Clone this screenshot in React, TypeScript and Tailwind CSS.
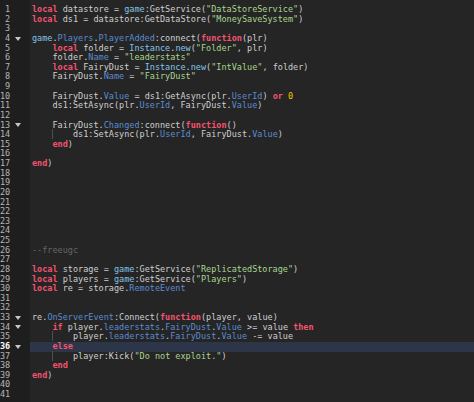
import React from 'react';

const code = [
  'local datastore = game:GetService("DataStoreService")',
  'local ds1 = datastore:GetDataStore("MoneySaveSystem")',
  '',
  'game.Players.PlayerAdded:connect(function(plr)',
  '    local folder = Instance.new("Folder", plr)',
  '    folder.Name = "leaderstats"',
  '    local FairyDust = Instance.new("IntValue", folder)',
  '    FairyDust.Name = "FairyDust"',
  '',
  '    FairyDust.Value = ds1:GetAsync(plr.UserId) or 0',
  '    ds1:SetAsync(plr.UserId, FairyDust.Value)',
  '',
  '    FairyDust.Changed:connect(function()',
  '        ds1:SetAsync(plr.UserId, FairyDust.Value)',
  '    end)',
  '',
  'end)',
  '',
  '',
  '',
  '',
  '',
  '',
  '',
  '',
  '--freeugc',
  '',
  'local storage = game:GetService("ReplicatedStorage")',
  'local players = game:GetService("Players")',
  'local re = storage.RemoteEvent',
  '',
  '',
  're.OnServerEvent:Connect(function(player, value)',
  '    if player.leaderstats.FairyDust.Value >= value then',
  '        player.leaderstats.FairyDust.Value -= value',
  '    else',
  '        player:Kick("Do not exploit.")',
  '    end',
  'end)',
  '',
  '',
];

const folds = [4, 13, 33, 34, 36];
const guides = [14, 35, 37];
const current = 36;

const keywords = ['local', 'function', 'end', 'if', 'then', 'else', 'or', 'and', 'not', 'return'];
const builtins = ['game', 'Instance', 'new'];

const colors = {
  keyword: 'text-[#f4536f] font-bold',
  builtin: 'text-[#82c6e6]',
  prop: 'text-[#5b8bd0]',
  string: 'text-[#a9d58f]',
  number: 'text-[#f5c400]',
  comment: 'text-[#666666]',
  plain: 'text-[#cfcfcf]',
};

type Kind = keyof typeof colors;

function tokenize(line: string) {
  const out: { text: string; kind: Kind }[] = [];
  const re = /(--.*$)|("[^"]*")|([A-Za-z_][A-Za-z0-9_]*)|(\d+)|(\s+)|(.)/g;
  let prev = '';
  let m: RegExpExecArray | null;
  while ((m = re.exec(line))) {
    const t = m[0];
    let kind: Kind = 'plain';
    if (m[1]) kind = 'comment';
    else if (m[2]) kind = 'string';
    else if (m[3]) {
      if (keywords.includes(t)) kind = 'keyword';
      else if (builtins.includes(t)) kind = 'builtin';
      else if (prev === '.') kind = 'prop';
    } else if (m[4]) kind = 'number';
    out.push({ text: t, kind });
    if (!m[5]) prev = t;
  }
  return out;
}

const Fold = () => (
  <svg width="6" height="4" viewBox="0 0 6 4" className="block">
    <path d="M0 0 H6 L3 4 Z" fill="#c8c8c8" />
  </svg>
);

const Tokens = ({ line }: { line: string }) => (
  <>
    {tokenize(line).map((t, j) => (
      <span key={j} className={colors[t.kind]}>
        {t.text}
      </span>
    ))}
  </>
);

export default function App() {
  return (
    <div className="w-[474px] h-[402px] overflow-hidden bg-[#252525] font-['DejaVu_Sans_Mono',monospace] text-[8.5px] leading-[9.625px]">
      <div className="flex h-full">
        <div className="w-[30px] bg-[#1e1e1e] pt-[5px] flex flex-col shrink-0">
          {code.map((_, i) => {
            const n = i + 1;
            return (
              <div key={n} className="h-[9.625px] shrink-0 flex items-center">
                <span
                  className={
                    n === current
                      ? 'w-[10px] text-right text-white font-bold'
                      : 'w-[10px] text-right text-[#b4b4b4]'
                  }
                >
                  {n}
                </span>
                <span className="w-[11px] flex justify-end">{folds.includes(n) && <Fold />}</span>
              </div>
            );
          })}
        </div>
        <div className="flex-1 pt-[5px] flex flex-col">
          {code.map((line, i) => {
            const n = i + 1;
            return (
              <div
                key={n}
                className={
                  n === current
                    ? 'h-[9.625px] shrink-0 pl-[2px] whitespace-pre bg-[#2c3648]'
                    : 'h-[9.625px] shrink-0 pl-[2px] whitespace-pre'
                }
              >
                {guides.includes(n) ? (
                  <>
                    <span>{'    '}</span>
                    <span className="shadow-[inset_1px_0_0_#4e4e4e]">{'    '}</span>
                    <Tokens line={line.slice(8)} />
                  </>
                ) : (
                  <Tokens line={line} />
                )}
              </div>
            );
          })}
        </div>
      </div>
    </div>
  );
}
